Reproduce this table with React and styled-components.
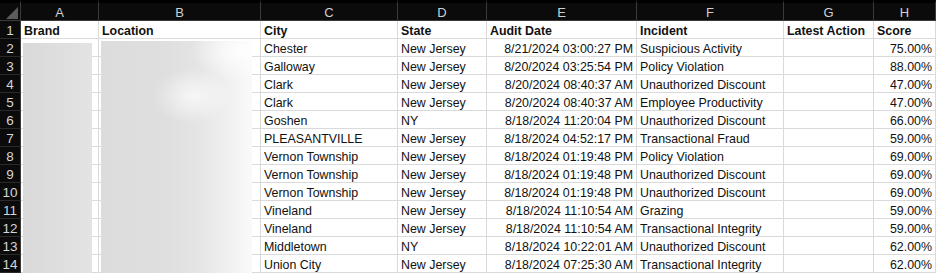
import React from "react";
import styled, { createGlobalStyle } from "styled-components";

const Global = createGlobalStyle`
  html, body { margin: 0; padding: 0; background: #ffffff; }
  body { font-family: "Liberation Sans", Arial, sans-serif; }
`;

const COLS = "21px 78px 162px 137px 89px 150px 147px 90px 62px";

const Sheet = styled.div`
  position: relative;
  width: 936px;
  height: 273px;
  overflow: hidden;
  background: #ffffff;
`;

const Grid = styled.div`
  display: grid;
  grid-template-columns: ${COLS};
  grid-template-rows: 21px repeat(14, 18px);
`;

const Corner = styled.div`
  background: #0b0b0b;
  border-right: 1px solid #3a3a3a;
  border-bottom: 1px solid #3a3a3a;
  border-top: 3px solid #000;
  box-sizing: border-box;
  position: relative;
`;

const ColHead = styled.div`
  background: #0b0b0b;
  border-top: 3px solid #000;
  border-right: 1px solid #3a3a3a;
  border-bottom: 1px solid #3a3a3a;
  box-sizing: border-box;
  color: #cfcfcf;
  font-size: 13px;
  display: flex;
  align-items: center;
  justify-content: center;
  line-height: 1;
  padding-top: 1px;
`;

const RowHead = styled.div`
  background: #0b0b0b;
  border-right: 1px solid #3a3a3a;
  border-bottom: 1px solid #2a2a2a;
  box-sizing: border-box;
  color: #d6d6d6;
  font-size: 13.5px;
  display: flex;
  align-items: center;
  justify-content: center;
  padding-top: 2px;
`;

const Cell = styled.div`
  border-right: 1px solid #dadada;
  border-bottom: 1px solid #dadada;
  box-sizing: border-box;
  color: #111111;
  font-size: 12.4px;
  font-weight: ${(p) => (p.$bold ? 700 : 400)};
  display: flex;
  align-items: center;
  justify-content: ${(p) => (p.$right ? "flex-end" : "flex-start")};
  padding: 2px 3px 0 3px;
  white-space: nowrap;
  overflow: hidden;
`;

const Blur = styled.div`
  position: absolute;
  pointer-events: none;
`;

const BlurA = styled(Blur)`
  left: 23px;
  top: 43px;
  width: 69px;
  bottom: 0;
  background: linear-gradient(90deg, #d9d9d9 0%, #dedede 50%, #e3e3e3 100%);
`;

const BlurB = styled(Blur)`
  left: 101px;
  top: 41px;
  width: 151px;
  bottom: 0;
  background:
    radial-gradient(ellipse 40px 28px at 92px 55px, rgba(255,255,255,0.7), rgba(255,255,255,0) 100%),
    radial-gradient(ellipse 50px 30px at 140px 10px, rgba(255,255,255,0.85), rgba(255,255,255,0) 100%),
    linear-gradient(90deg, #dcdcdc 0%, #dfdfdf 45%, #e5e5e5 65%, #f0f0f0 84%, #fafafa 100%);
`;

const Triangle = styled.svg`
  position: absolute;
  left: 5px;
  top: 3px;
`;

const letters = ["A", "B", "C", "D", "E", "F", "G", "H"];
const headers = ["Brand", "Location", "City", "State", "Audit Date", "Incident", "Latest Action", "Score"];

const rows = [
  ["Chester", "New Jersey", "8/21/2024 03:00:27 PM", "Suspicious Activity", "75.00%"],
  ["Galloway", "New Jersey", "8/20/2024 03:25:54 PM", "Policy Violation", "88.00%"],
  ["Clark", "New Jersey", "8/20/2024 08:40:37 AM", "Unauthorized Discount", "47.00%"],
  ["Clark", "New Jersey", "8/20/2024 08:40:37 AM", "Employee Productivity", "47.00%"],
  ["Goshen", "NY", "8/18/2024 11:20:04 PM", "Unauthorized Discount", "66.00%"],
  ["PLEASANTVILLE", "New Jersey", "8/18/2024 04:52:17 PM", "Transactional Fraud", "59.00%"],
  ["Vernon Township", "New Jersey", "8/18/2024 01:19:48 PM", "Policy Violation", "69.00%"],
  ["Vernon Township", "New Jersey", "8/18/2024 01:19:48 PM", "Unauthorized Discount", "69.00%"],
  ["Vernon Township", "New Jersey", "8/18/2024 01:19:48 PM", "Unauthorized Discount", "69.00%"],
  ["Vineland", "New Jersey", "8/18/2024 11:10:54 AM", "Grazing", "59.00%"],
  ["Vineland", "New Jersey", "8/18/2024 11:10:54 AM", "Transactional Integrity", "59.00%"],
  ["Middletown", "NY", "8/18/2024 10:22:01 AM", "Unauthorized Discount", "62.00%"],
  ["Union City", "New Jersey", "8/18/2024 07:25:30 AM", "Transactional Integrity", "62.00%"],
];

export default function App() {
  return (
    <Sheet>
      <Global />
      <Grid>
        <Corner>
          <Triangle width="13" height="13" viewBox="0 0 13 13">
            <polygon points="13,1 13,13 1,13" fill="#5c5c5c" />
          </Triangle>
        </Corner>
        {letters.map((l) => (
          <ColHead key={l}>{l}</ColHead>
        ))}
        <RowHead>1</RowHead>
        {headers.map((h) => (
          <Cell key={h} $bold>{h}</Cell>
        ))}
        {rows.map((r, i) => (
          <React.Fragment key={i}>
            <RowHead>{i + 2}</RowHead>
            <Cell />
            <Cell />
            <Cell>{r[0]}</Cell>
            <Cell>{r[1]}</Cell>
            <Cell $right>{r[2]}</Cell>
            <Cell>{r[3]}</Cell>
            <Cell />
            <Cell $right>{r[4]}</Cell>
          </React.Fragment>
        ))}
      </Grid>
      <BlurA />
      <BlurB />
    </Sheet>
  );
}
